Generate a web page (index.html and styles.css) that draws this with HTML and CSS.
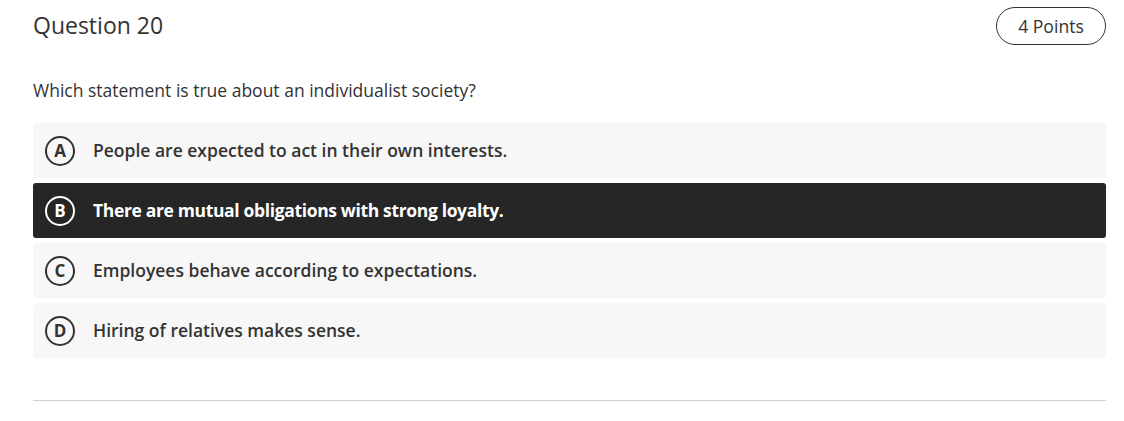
FILE: index.html
```html
<!DOCTYPE html>
<html>
<head>
<meta charset="utf-8">
<link rel="stylesheet" href="styles.css">
</head>
<body>
<div class="question">
  <div class="header">
    <h2 class="title">Question 20</h2>
    <div class="points">4 Points</div>
  </div>
  <p class="prompt">Which statement is true about an individualist society?</p>
  <div class="options">
    <div class="option"><span class="letter">A</span><span class="text">People are expected to act in their own interests.</span></div>
    <div class="option selected"><span class="letter">B</span><span class="text">There are mutual obligations with strong loyalty.</span></div>
    <div class="option"><span class="letter">C</span><span class="text">Employees behave according to expectations.</span></div>
    <div class="option"><span class="letter">D</span><span class="text">Hiring of relatives makes sense.</span></div>
  </div>
  <hr class="divider">
</div>
</body>
</html>
```
FILE: styles.css
```css
html, body {
  margin: 0;
  padding: 0;
  background: #ffffff;
}
body {
  font-family: "Open Sans", "Liberation Sans", sans-serif;
  color: #333333;
}
.question {
  padding: 7px 18px 0 33px;
}
.header {
  display: flex;
  align-items: center;
  justify-content: space-between;
  height: 38px;
}
.title {
  margin: 0;
  font-size: 23px;
  font-weight: 400;
  line-height: 30px;
  color: #333333;
  position: relative;
  top: -1px;
}
.points {
  box-sizing: border-box;
  height: 38px;
  width: 110px;
  border: 1px solid #333333;
  border-radius: 19px;
  display: flex;
  align-items: center;
  justify-content: center;
  font-size: 17.6px;
  color: #333333;
}
.prompt {
  margin: 32px 0 0 0;
  font-size: 17.5px;
  line-height: 26px;
  color: #333333;
}
.options {
  margin-top: 20px;
  display: flex;
  flex-direction: column;
  gap: 5px;
}
.option {
  height: 55px;
  box-sizing: border-box;
  background: #f7f7f7;
  border-radius: 3px;
  display: flex;
  align-items: center;
  padding-left: 12px;
  gap: 18px;
}
.letter {
  box-sizing: border-box;
  width: 30px;
  height: 30px;
  border: 2px solid #333333;
  border-radius: 50%;
  display: flex;
  align-items: center;
  justify-content: center;
  font-size: 17px;
  font-weight: 700;
  color: #333333;
  flex: none;
}
.text {
  font-size: 17.5px;
  font-weight: 600;
  color: #333333;
  position: relative;
  top: -1px;
}
.option.selected {
  background: #262626;
}
.option.selected .letter {
  border-color: #ffffff;
  color: #ffffff;
}
.option.selected .text {
  color: #ffffff;
  font-weight: 700;
  letter-spacing: -0.35px;
}
.divider {
  margin: 42px 0 0 0;
  border: 0;
  border-top: 1px solid #d0d0d0;
  height: 0;
}
```
